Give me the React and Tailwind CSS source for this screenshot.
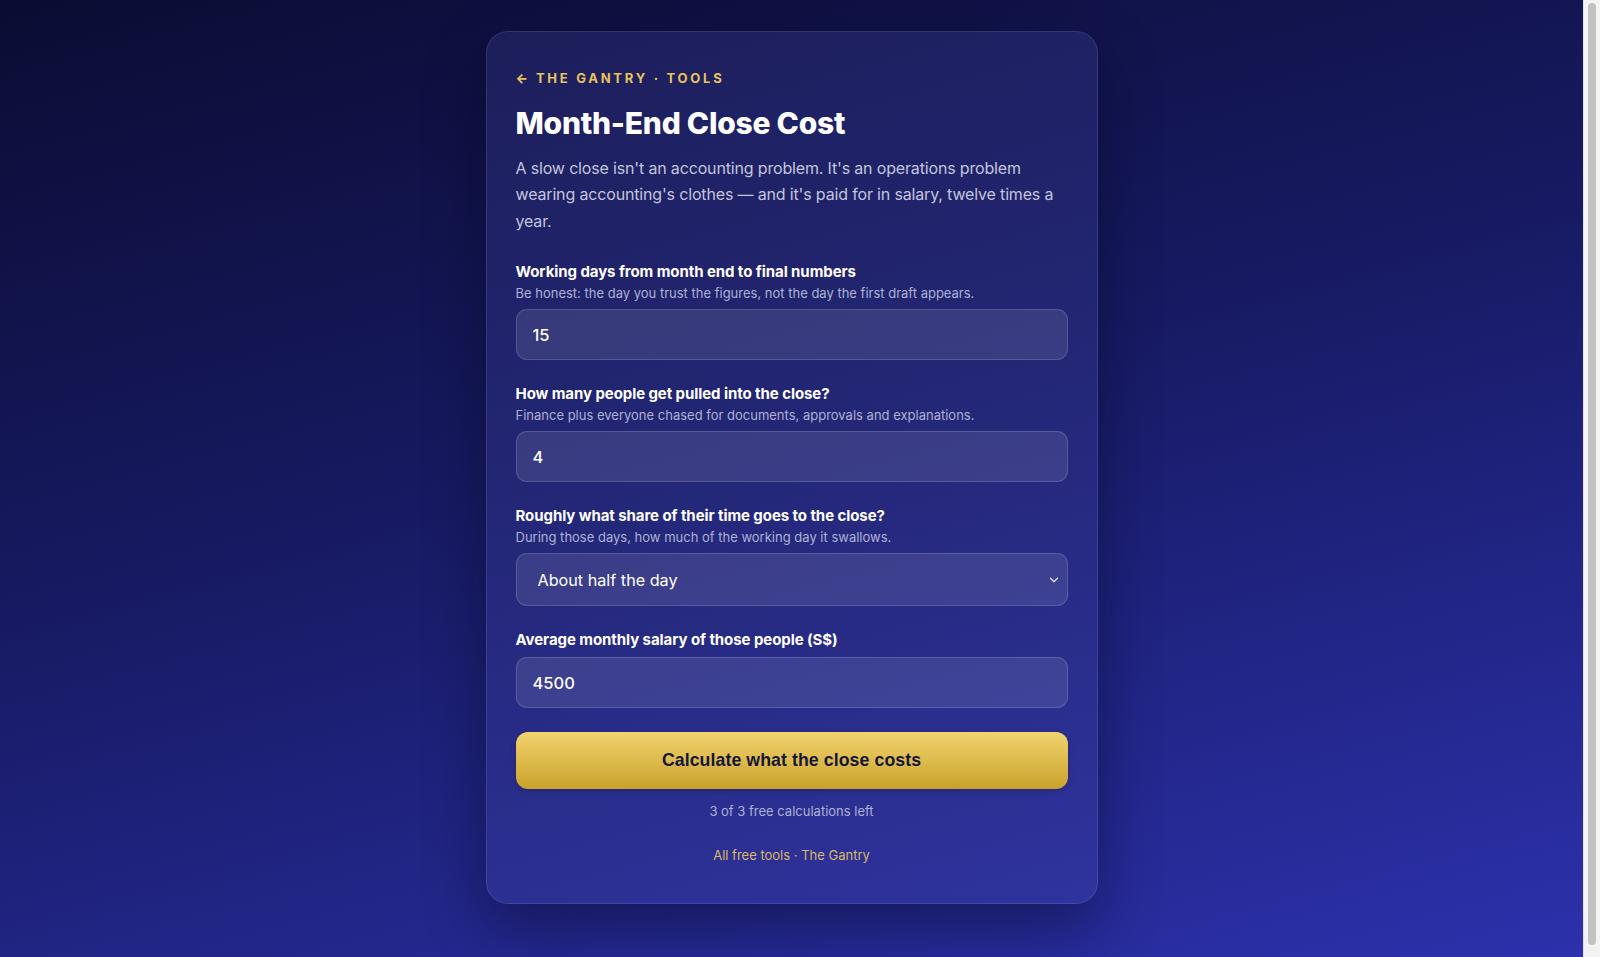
import React from 'react';
import { ChevronDown } from 'lucide-react';

const fields = [
  {
    label: 'Working days from month end to final numbers',
    hint: 'Be honest: the day you trust the figures, not the day the first draft appears.',
    value: '15',
  },
  {
    label: 'How many people get pulled into the close?',
    hint: 'Finance plus everyone chased for documents, approvals and explanations.',
    value: '4',
  },
];

function Field({ label, hint, children }) {
  return (
    <div className="mb-6">
      <div className="text-[15px] leading-5 font-bold tracking-[-0.005em] text-white">{label}</div>
      {hint && <div className="mt-[2px] text-[13px] leading-[18px] text-[#aeb1d6]">{hint}</div>}
      <div className="mt-[7px]">{children}</div>
    </div>
  );
}

function TextInput({ value }) {
  return (
    <input
      type="text"
      defaultValue={value}
      className="w-full h-[51px] rounded-[11px] border border-white/15 bg-white/10 px-4 text-[16.5px] font-medium text-white outline-none"
    />
  );
}

export default function App() {
  return (
    <div className="h-screen w-full flex overflow-hidden font-['Inter',sans-serif]">
      <main className="flex-1 min-w-0 flex justify-center pt-[31px] pb-[64px] bg-[linear-gradient(165deg,#0b0c33_0%,#171a62_45%,#2c31ac_100%)]">
        <div className="w-[612px] h-fit rounded-[22px] border border-white/10 bg-[rgba(70,75,170,0.25)] shadow-[0_24px_60px_rgba(5,6,30,0.45)] px-[29px] pt-9 pb-[39px]">
          {/* header */}
          <div className="flex items-center gap-[8px] text-[13px] leading-5 font-bold tracking-[0.21em] text-[#e9c35c]">
            <span className="tracking-normal font-extrabold">←</span>
            <span>THE GANTRY · TOOLS</span>
          </div>
          <h1 className="mt-[17px] text-[30px] leading-9 font-extrabold tracking-[-0.008em] text-white">
            Month-End Close Cost
          </h1>
          <p className="mt-[14px] text-[16px] leading-[26.4px] tracking-[-0.01em] text-[#c3c5dd]">
            A slow close isn't an accounting problem. It's an operations problem wearing accounting's clothes — and it's paid for in salary, twelve times a year.
          </p>

          <div className="mt-[28px]">
            {fields.map((f) => (
              <Field key={f.label} label={f.label} hint={f.hint}>
                <TextInput value={f.value} />
              </Field>
            ))}

            <Field
              label="Roughly what share of their time goes to the close?"
              hint="During those days, how much of the working day it swallows."
            >
              <div className="relative">
                <select
                  defaultValue="half"
                  className="w-full h-[53px] appearance-none rounded-[11px] border border-white/15 bg-white/10 pl-[21px] pr-10 text-[16.2px] text-white outline-none"
                >
                  <option value="quarter" className="text-black">About a quarter of the day</option>
                  <option value="half" className="text-black">About half the day</option>
                  <option value="most" className="text-black">Most of the day</option>
                </select>
                <ChevronDown
                  size={14}
                  strokeWidth={2.5}
                  className="pointer-events-none absolute right-[7px] top-1/2 -translate-y-1/2 text-[#d9dbf0]"
                />
              </div>
            </Field>

            <Field label="Average monthly salary of those people (S$)">
              <TextInput value="4500" />
            </Field>
          </div>

          <button className="w-full h-[57px] rounded-[12px] bg-[linear-gradient(180deg,#f2d36f_0%,#c9a22b_100%)] text-[17.7px] font-bold tracking-[0.005em] text-[#14163a] font-['Liberation_Sans',Arial,sans-serif] shadow-[0_2px_6px_rgba(0,0,0,0.2)]">
            Calculate what the close costs
          </button>

          <div className="mt-[13px] text-center text-[13px] leading-[18px] text-[#aeb1d6]">
            3 of 3 free calculations left
          </div>
          <div className="mt-[26px] text-center text-[13px] leading-[18px] text-[#d8b868]">
            All free tools · The Gantry
          </div>
        </div>
      </main>

      {/* browser scrollbar */}
      <div className="w-[17px] shrink-0 bg-[#f3f3f3] border-l border-[#e2e2e2] px-[4px] pt-[3px] pb-[12px]">
        <div className="h-full w-full rounded-full bg-[#c2c2c2]" />
      </div>
    </div>
  );
}
